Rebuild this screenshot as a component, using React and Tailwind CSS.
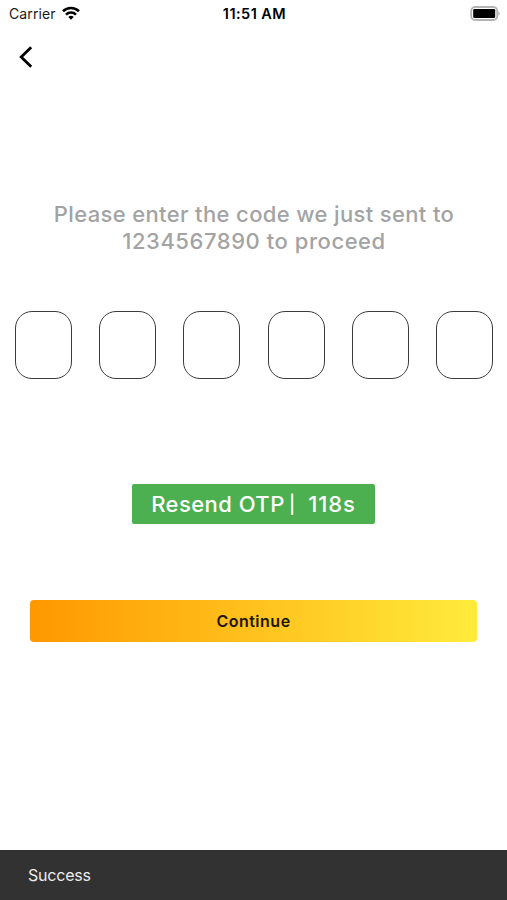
function StatusBar() {
  return (
    <div className="grid h-7 shrink-0 grid-cols-3 items-center pl-[9px] pr-[6px] text-[#1a1a1a]">
      <div className="flex items-center gap-[6px]">
        <span className="text-[14px] leading-7 tracking-[0.1px]">Carrier</span>
        <svg className="mb-[3px]" width="18" height="14" viewBox="0 0 18 14" fill="none" stroke="#000" strokeWidth="2.6">
          <path d="M1 5.3a11.4 11.4 0 0 1 16 0" />
          <path d="M4 8.6a7.1 7.1 0 0 1 10 0" />
          <path d="M9 13.7 6.3 11a3.8 3.8 0 0 1 5.4 0Z" fill="#000" stroke="none" />
        </svg>
      </div>
      <span className="mr-[1px] text-center text-[14.5px] font-semibold leading-7 tracking-[0.45px] text-black">11:51 AM</span>
      <svg className="mb-[2px] justify-self-end" width="31" height="15" viewBox="0 0 31 15">
        <rect x="1.2" y="1" width="26" height="13" rx="4" fill="#fff" stroke="#b4b4b4" strokeWidth="1.8" />
        <rect x="3.2" y="3" width="22" height="9" rx="1.2" fill="#000" />
        <path d="M28.4 5.2q3 2.3 0 4.6Z" fill="#b4b4b4" />
      </svg>
    </div>
  );
}

export default function App() {
  return (
    <div className="flex h-[900px] w-[507px] flex-col overflow-hidden bg-white font-['Inter','Liberation_Sans',sans-serif]">
      <StatusBar />
      <header className="flex h-[57px] shrink-0 items-center pl-[18px]">
        <button aria-label="Back">
          <svg width="16" height="24" viewBox="0 0 16 24" fill="none" stroke="#000" strokeWidth="2.8">
            <path d="M13.2 2.2 3.2 12l10 9.8" />
          </svg>
        </button>
      </header>

      <main className="flex grow flex-col pt-[116px]">
        <p className="pl-[1px] text-center text-[22px] font-medium leading-[27px] tracking-[0.55px] text-[#a3a3a3]">
          <span className="tracking-[0.36px]">Please enter the code we just sent to</span>
          <br />
          1234567890 to proceed
        </p>

        <div className="mt-[56px] flex justify-between pl-[15px] pr-[14px]">
          {[0, 1, 2, 3, 4, 5].map((i) => (
            <input key={i} aria-label={`Digit ${i + 1}`} className="h-[68px] w-[57px] rounded-[17px] border border-[#3c3c3c] text-center" />
          ))}
        </div>

        <button className="mt-[105px] h-10 w-[243px] self-center whitespace-pre rounded-[2px] bg-[#4caf50] text-[22px] font-medium leading-10 tracking-[0.45px] text-white">
          Resend OTP<span className="-ml-[1px] align-[1px] text-[18px]"> |</span>{"  "}<span className="tracking-[0.9px]">118s</span>
        </button>

        <button className="mx-[30px] mt-[76px] h-[42px] rounded-[4px] bg-linear-to-r/srgb from-[#ff9800] to-[#ffeb3b] text-[16px] font-semibold leading-[42px] tracking-[0.5px] text-[#1c1608]">
          Continue
        </button>
      </main>

      <footer className="flex h-[50px] shrink-0 items-center bg-[#323232] pl-7 text-[16px] tracking-[-0.2px] text-[#ececec]">
        Success
      </footer>
    </div>
  );
}
